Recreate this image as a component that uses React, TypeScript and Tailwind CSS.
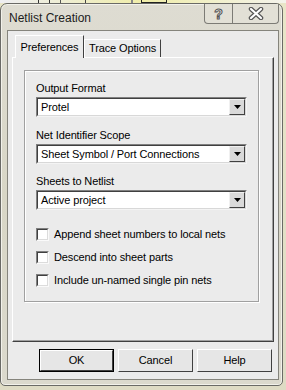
import React from "react";

const font = { fontFamily: '"Liberation Sans", Arial, sans-serif' };
const txt = "text-[11px] leading-none text-black tracking-[-0.12px]";

function Combo({ value }: { value: string }) {
  return (
    <div className="flex h-[20px] w-[211px] border border-t-[#808080] border-l-[#808080] border-r-[#f4f4f4] border-b-[#f4f4f4]">
      <div className="flex flex-1 border border-t-[#404040] border-l-[#404040] border-r-[#d8d8d8] border-b-[#d8d8d8] bg-white">
        <div className={`flex flex-1 items-center pl-[3px] ${txt} text-[11.5px]`}>{value}</div>
        <div className="flex h-full w-[16px] items-center justify-center border border-t-[#f0f0f0] border-l-[#f0f0f0] border-r-[#404040] border-b-[#404040] bg-[#d9d9d9]">
          <svg width="7" height="4" viewBox="0 0 7 4">
            <path d="M0 0h7L3.5 4z" fill="#000" />
          </svg>
        </div>
      </div>
    </div>
  );
}

function Check({ label }: { label: string }) {
  return (
    <div className="flex h-[13px] items-center gap-[5px]">
      <div className="h-[13px] w-[13px] border border-t-[#808080] border-l-[#808080] border-r-[#fafafa] border-b-[#fafafa]">
        <div className="h-full w-full border border-t-[#404040] border-l-[#404040] border-r-[#dcdcdc] border-b-[#dcdcdc] bg-white" />
      </div>
      <span className={`${txt} text-[11.5px]`}>{label}</span>
    </div>
  );
}

function Btn({ label, def }: { label: string; def?: boolean }) {
  return (
    <div className={`h-[23px] w-[75px] ${def ? "border border-black" : ""}`}>
      <div className="flex h-full w-full items-center justify-center border border-t-white border-l-white border-r-[#404040] border-b-[#404040] bg-[#e6e6e6]">
        <span className={`${txt} text-[11.5px]`}>{label}</span>
      </div>
    </div>
  );
}

export default function App() {
  return (
    <div className="relative h-[390px] w-[286px] overflow-hidden bg-gradient-to-b from-[#e9e6c8] to-[#dedbc4]" style={font}>
      <div className="flex h-[3px] w-full bg-gradient-to-r from-[#eeeef2] via-[#f0eda8] to-[#f4f3ec]">
        <div className="ml-[38px] h-full w-px bg-[#333]" />
        <div className="ml-[10px] h-full w-px bg-[#333]" />
        <div className="ml-[10px] h-full w-px bg-[#555]" />
        <div className="ml-[24px] h-full w-px bg-[#444]" />
        <div className="ml-[45px] h-full w-[2px] bg-[#888]" />
        <div className="ml-[8px] h-full w-[26px] border-x border-b border-[#222]" />
      </div>
      <div className="flex h-[383px] w-[283px] flex-col rounded-t-[7px] rounded-b-[5px] border border-[#6a6a66] bg-gradient-to-b from-[#dedcd2] via-[#d8d6c6] to-[#dbd9cd] shadow-[inset_0_0_0_1px_#f2f1ea]">
        <div className="flex h-[26px] items-start justify-between">
          <span className="ml-[8px] mt-[8px] text-[12px] leading-none text-[#1c1c1c]">Netlist Creation</span>
          <div className="mr-[3px] flex h-[20px]">
            <div className="flex w-[29px] items-center justify-center rounded-bl-[4px] border border-t-0 border-[#7c7b75] bg-[#e2e0d6]">
              <span className="text-[14px] font-bold leading-none text-white [-webkit-text-stroke:1px_#555]">?</span>
            </div>
            <div className="flex w-[46px] items-center justify-center rounded-br-[4px] border border-l-0 border-t-0 border-[#7c7b75] bg-[#e2e0d6]">
              <svg width="16" height="13" viewBox="0 0 16 13">
                <path d="M3 2l10 9M13 2L3 11" stroke="#555" strokeWidth="4.5" strokeLinecap="round" />
                <path d="M3 2l10 9M13 2L3 11" stroke="#fff" strokeWidth="2.2" strokeLinecap="round" />
              </svg>
            </div>
          </div>
        </div>
        <div className="ml-[6px] flex h-[350px] w-[272px] flex-col border border-[#85847c] bg-[#ebebeb]">
          <div className="ml-[7px] mt-[4px] flex items-end">
            <div className="relative z-10 -mb-[1px] flex h-[23px] w-[69px] items-center justify-center border border-b-0 border-l-white border-t-white border-r-[#404040] bg-[#ebebeb]">
              <span className={`${txt} text-[11.5px]`}>Preferences</span>
            </div>
            <div className="flex h-[18px] w-[77px] items-center justify-center border border-b-0 border-l-white border-t-white border-r-[#404040]">
              <span className={`${txt} text-[11.5px]`}>Trace Options</span>
            </div>
          </div>
          <div className="ml-[4px] flex h-[285px] w-[262px] flex-col border border-t-white border-l-white border-r-[#404040] border-b-[#404040]">
            <div className="h-full w-full border-b border-r border-[#a0a0a0] pl-[11px] pt-[12px]">
              <div className="flex h-[232px] w-[235px] flex-col border border-[#a0a0a0] pl-[11px] pt-[12px] shadow-[1px_1px_0_#fff,inset_1px_1px_0_#fff]">
                <span className={txt}>Output Format</span>
                <div className="mt-[3px]"><Combo value="Protel" /></div>
                <span className={`mt-[13px] ${txt}`}>Net Identifier Scope</span>
                <div className="mt-[3px]"><Combo value="Sheet Symbol / Port Connections" /></div>
                <span className={`mt-[12px] ${txt}`}>Sheets to Netlist</span>
                <div className="mt-[3px]"><Combo value="Active project" /></div>
                <div className="mt-[18px] flex flex-col gap-[10px]">
                  <Check label="Append sheet numbers to local nets" />
                  <Check label="Descend into sheet parts" />
                  <Check label="Include un-named single pin nets" />
                </div>
              </div>
            </div>
          </div>
          <div className="ml-[31px] mt-[7px] flex gap-[4px]">
            <Btn label="OK" def />
            <Btn label="Cancel" />
            <Btn label="Help" />
          </div>
        </div>
      </div>
    </div>
  );
}
